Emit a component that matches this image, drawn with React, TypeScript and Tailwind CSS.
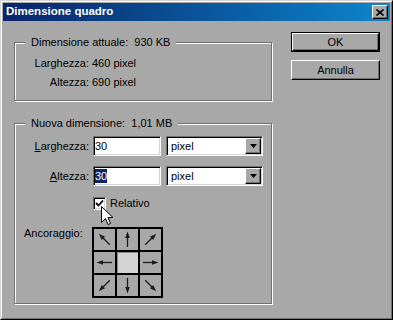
// finestra "Dimensione quadro" - stile Windows classico

const sunken =
	"border border-t-[#707070] border-l-[#707070] border-r-white border-b-white shadow-[inset_1px_1px_0_#000,inset_-1px_-1px_0_#d4d4d4]"
const raised =
	"border border-t-white border-l-white border-r-black border-b-black shadow-[inset_-1px_-1px_0_#707070]"
const etched =
	"border border-[#707070] shadow-[1px_1px_0_#fff,inset_1px_1px_0_#fff] min-w-0"

function Arrow({ deg }: { deg: number }) {
	return (
		<svg width="21" height="21" viewBox="0 0 21 21">
			<g transform={`rotate(${deg} 10.5 10.5)`}>
				<line x1="3" y1="10.5" x2="14" y2="10.5" stroke="#1c1c1c" strokeWidth="1.3" />
				<polygon points="18.5,10.5 12,8.2 12,12.8" fill="#1c1c1c" />
			</g>
		</svg>
	)
}

function Select() {
	return (
		<div className={`ml-[5px] w-[97px] h-[20px] bg-white flex items-center ${sunken}`}>
			<span className="pl-[4px]">pixel</span>
			<div className={`ml-auto mr-[1px] w-[16px] h-[16px] bg-[#a8a8a8] flex items-center justify-center ${raised}`}>
				<svg width="7" height="4" viewBox="0 0 7 4">
					<polygon points="0,0 7,0 3.5,4" fill="#000" />
				</svg>
			</div>
		</div>
	)
}

export default function App() {
	// direzioni delle frecce, cella centrale = null
	const anchors: (number | null)[] = [-135, -90, -45, 180, null, 0, 135, 90, 45]

	return (
		<div className="w-[393px] h-[320px] bg-[#a8a8a8] border border-t-[#d4d4d4] border-l-[#d4d4d4] border-r-black border-b-black font-['Liberation_Sans',Arial,sans-serif] text-[11px] text-black">
			<div className="h-full border border-t-white border-l-white border-r-[#707070] border-b-[#707070] p-px flex flex-col">

				{/* barra del titolo */}
				<div className="h-[18px] flex items-center pl-[3px] pr-[2px] bg-linear-to-r from-[#0a246a] to-[#0d86cc]">
					<span className="text-white font-bold text-[11.5px] leading-none">Dimensione quadro</span>
					<div className={`ml-auto w-[16px] h-[14px] bg-[#a8a8a8] flex items-center justify-center ${raised}`}>
						<svg width="8" height="7" viewBox="0 0 8 7">
							<path d="M0.5 0.5 L7.5 6.5 M7.5 0.5 L0.5 6.5" stroke="#000" strokeWidth="1.6" />
						</svg>
					</div>
				</div>

				<div className="flex gap-[19px] pl-[11px]">
					{/* colonna sinistra */}
					<div className="w-[258px] pt-[15px]">
						<fieldset className={`${etched} pb-[8px]`}>
							<legend className="ml-[10px] px-[6px] leading-[13px] bg-[#a8a8a8]">Dimensione attuale:&nbsp; 930 KB</legend>
							<div className="mt-[5px] leading-[19px]">
								<div className="flex">
									<span className="w-[74px] text-right">Larghezza:</span>
									<span className="pl-[3px]">460 pixel</span>
								</div>
								<div className="flex">
									<span className="w-[74px] text-right">Altezza:</span>
									<span className="pl-[3px]">690 pixel</span>
								</div>
							</div>
						</fieldset>

						<fieldset className={`${etched} mt-[16px] pb-[5px]`}>
							<legend className="ml-[10px] px-[6px] leading-[13px] bg-[#a8a8a8]">Nuova dimensione:&nbsp; 1,01 MB</legend>

							<div className="mt-[6px] flex items-center">
								<span className="w-[74px] text-right"><u>L</u>arghezza:</span>
								<div className={`ml-[4px] w-[68px] h-[20px] bg-white flex items-center pl-[1px] ${sunken}`}>30</div>
								<Select />
							</div>

							<div className="mt-[10px] flex items-center">
								<span className="w-[74px] text-right"><u>A</u>ltezza:</span>
								<div className={`ml-[4px] w-[68px] h-[20px] bg-white flex items-center pl-[1px] ${sunken}`}>
									<span className="bg-[#0a246a] text-white leading-[14px]">30</span>
								</div>
								<Select />
							</div>

							<div className="mt-[11px] ml-[78px] flex items-center gap-[4px] relative">
								<div className={`w-[13px] h-[13px] bg-white flex items-center justify-center ${sunken}`}>
									<svg width="9" height="9" viewBox="0 0 9 9">
										<path d="M1 4 L3.5 6.5 L8 1.5" stroke="#000" strokeWidth="1.8" fill="none" />
									</svg>
								</div>
								<span className="leading-[13px]">Relativo</span>
								{/* puntatore del mouse */}
								<svg className="absolute left-[8px] top-[9px]" width="13" height="20" viewBox="0 0 13 20">
									<path d="M0.5 0.5 L0.5 16.5 L4.5 12.5 L7 18.5 L9.5 17.5 L7 11.5 L12 11.5 Z" fill="#fff" stroke="#000" strokeWidth="1" />
								</svg>
							</div>

							<div className="mt-[17px] flex items-start">
								<span className="w-[77px] pl-[9px] leading-[13px]">Ancoraggio:</span>
								<div className="grid grid-cols-[repeat(3,21px)] gap-[2px] p-[2px] bg-black">
									{anchors.map((deg, i) =>
										deg === null ? (
											<div key={i} className="w-[21px] h-[21px] bg-[#d4d4d4] border-t border-l border-[#8a8a8a]" />
										) : (
											<div key={i} className="w-[21px] h-[21px] bg-[#a8a8a8]">
												<Arrow deg={deg} />
											</div>
										)
									)}
								</div>
							</div>
						</fieldset>
					</div>

					{/* pulsanti */}
					<div className="pt-[11px] flex flex-col">
						<div className="w-[89px] h-[20px] border border-black">
							<div className={`h-full flex items-center justify-center ${raised}`}>OK</div>
						</div>
						<div className={`mt-[8px] w-[89px] h-[20px] flex items-center justify-center ${raised}`}>Annulla</div>
					</div>
				</div>
			</div>
		</div>
	)
}
